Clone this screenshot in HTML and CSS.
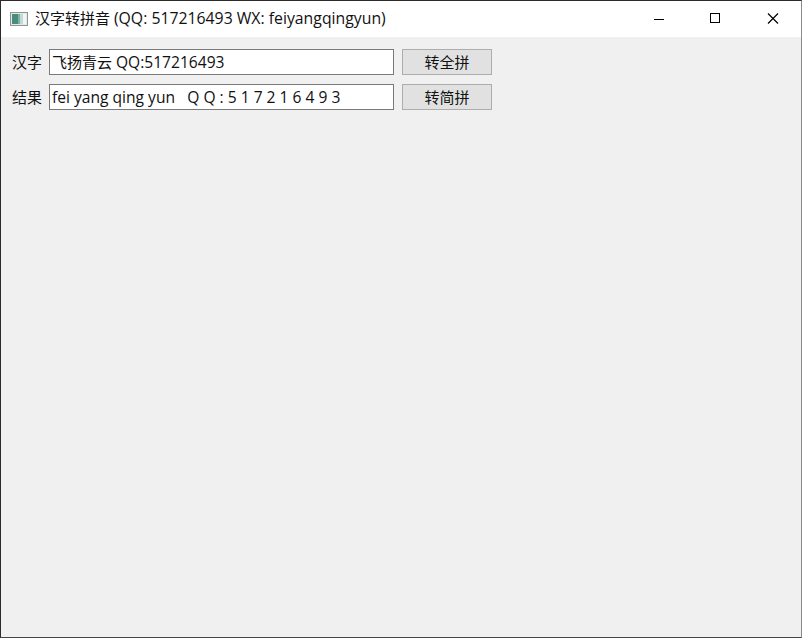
FILE: index.html
```html
<!DOCTYPE html>
<html lang="zh-CN">
<head>
<meta charset="utf-8">
<title>汉字转拼音</title>
<link rel="stylesheet" href="styles.css">
</head>
<body>
<div class="window">
  <header class="titlebar">
    <svg class="app-icon" width="18" height="14" viewBox="0 0 18 14">
      <rect x="0.5" y="0.5" width="17" height="13" fill="#e4e9e8" stroke="#8b9795"/>
      <rect x="2" y="2" width="6" height="10" fill="#4a8b7c"/>
      <rect x="8" y="2" width="2" height="10" fill="#7fb0a4"/>
      <rect x="10" y="2" width="3" height="10" fill="#c3d9d3"/>
      <rect x="13" y="2" width="3" height="10" fill="#f4f6f5"/>
    </svg>
    <span class="title">汉字转拼音 <span class="latin">(QQ: 517216493 WX: feiyangqingyun)</span></span>
    <div class="controls">
      <button class="ctl" aria-label="最小化"><svg width="12" height="12" viewBox="0 0 12 12"><path d="M1 6.5H11" stroke="#000" fill="none"/></svg></button>
      <button class="ctl" aria-label="最大化"><svg width="12" height="12" viewBox="0 0 12 12"><rect x="0.5" y="0.5" width="9" height="9" stroke="#000" fill="none"/></svg></button>
      <button class="ctl" aria-label="关闭"><svg width="12" height="12" viewBox="0 0 12 12"><path d="M1 0.5L11 10.5M11 0.5L1 10.5" stroke="#000" stroke-width="1.2" fill="none"/></svg></button>
    </div>
  </header>
  <main class="content">
    <div class="row">
      <span class="label">汉字</span>
      <div class="field">飞扬青云 <span class="latin-field">QQ:517216493</span></div>
      <div class="btn">转全拼</div>
    </div>
    <div class="row">
      <span class="label">结果</span>
      <div class="field"><span class="latin-field">fei yang qing yun&nbsp;&nbsp; Q Q : 5 1 7 2 1 6 4 9 3</span></div>
      <div class="btn">转简拼</div>
    </div>
  </main>
</div>
</body>
</html>
```
FILE: styles.css
```css
* { box-sizing: border-box; }
html, body { margin: 0; padding: 0; height: 100%; }
body {
  font-family: "Open Sans", "Noto Sans CJK SC", sans-serif;
  color: #111;
  background: #f0f0f0;
  overflow: hidden;
}
.window {
  width: 802px;
  height: 638px;
  display: flex;
  flex-direction: column;
  background: #f0f0f0;
  border: 1px solid #2b2b2b;
  border-right-color: #8a8a8a;
  border-bottom-color: #444;
}
.titlebar {
  height: 36px;
  flex: none;
  background: #fff;
  display: flex;
  align-items: center;
  padding-left: 9px;
}
.app-icon { flex: none; margin-right: 7px; }
.title { font-size: 15px; line-height: 20px; white-space: nowrap; margin-bottom: 2px; }
.latin { font-size: 15.8px; }
.latin-field { font-size: 15.6px; }
.controls { margin-left: auto; display: flex; gap: 45px; padding-right: 22px; }
.ctl {
  width: 12px;
  height: 36px;
  padding: 0;
  border: 0;
  background: none;
  display: flex;
  align-items: center;
  justify-content: center;
}
.content {
  padding: 12px 0 0 11px;
  display: flex;
  flex-direction: column;
  gap: 9px;
}
.row { display: flex; align-items: center; height: 26px; }
.label { width: 37px; font-size: 15px; flex: none; margin-bottom: 2px; }
.field {
  width: 345px;
  height: 26px;
  flex: none;
  background: #fff;
  border: 1px solid #7a7a7a;
  padding-left: 2px;
  font-size: 15px;
  line-height: 24px;
  white-space: pre;
}
.btn {
  width: 90px;
  height: 26px;
  margin-left: 8px;
  flex: none;
  background: #e1e1e1;
  border: 1px solid #adadad;
  font-size: 15px;
  line-height: 24px;
  text-align: center;
}
```
